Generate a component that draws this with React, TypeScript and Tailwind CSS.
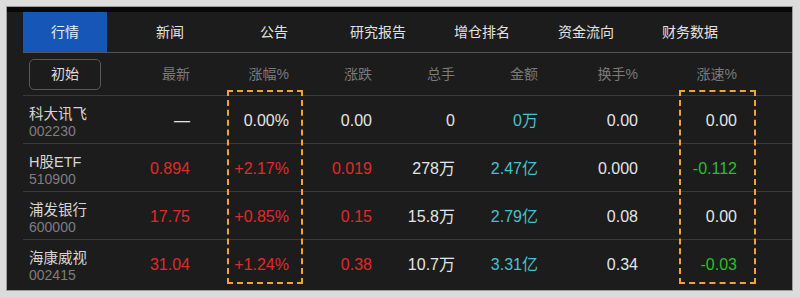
const font = { fontFamily: '"Liberation Sans", "Noto Sans CJK SC", sans-serif' };

const tabs = ["新闻", "公告", "研究报告", "增仓排名", "资金流向", "财务数据"];
const heads = ["最新", "涨幅%", "涨跌", "总手", "金额", "换手%", "涨速%"];

type Row = {
  name: string;
  code: string;
  cells: { v: string; c: string }[];
};

const W = "text-[#e4e4e4]";
const R = "text-[#e02a2a]";
const C = "text-[#45c3cc]";
const G = "text-[#2bbf2b]";

const rows: Row[] = [
  {
    name: "科大讯飞",
    code: "002230",
    cells: [
      { v: "—", c: W },
      { v: "0.00%", c: W },
      { v: "0.00", c: W },
      { v: "0", c: W },
      { v: "0万", c: C },
      { v: "0.00", c: W },
      { v: "0.00", c: W },
    ],
  },
  {
    name: "H股ETF",
    code: "510900",
    cells: [
      { v: "0.894", c: R },
      { v: "+2.17%", c: R },
      { v: "0.019", c: R },
      { v: "278万", c: W },
      { v: "2.47亿", c: C },
      { v: "0.000", c: W },
      { v: "-0.112", c: G },
    ],
  },
  {
    name: "浦发银行",
    code: "600000",
    cells: [
      { v: "17.75", c: R },
      { v: "+0.85%", c: R },
      { v: "0.15", c: R },
      { v: "15.8万", c: W },
      { v: "2.79亿", c: C },
      { v: "0.08", c: W },
      { v: "0.00", c: W },
    ],
  },
  {
    name: "海康威视",
    code: "002415",
    cells: [
      { v: "31.04", c: R },
      { v: "+1.24%", c: R },
      { v: "0.38", c: R },
      { v: "10.7万", c: W },
      { v: "3.31亿", c: C },
      { v: "0.34", c: W },
      { v: "-0.03", c: G },
    ],
  },
];

const grid = "grid grid-cols-[84px_83px_99px_83px_83px_83px_100px_99px_1fr]";

export default function App() {
  return (
    <div className="w-[800px] h-[298px] bg-[#dcdcdc] pt-[6px] pl-[6px]" style={font}>
      <div className="relative w-[787px] h-[285px] border border-[#9c9c9c] bg-[#1c1c1c] overflow-hidden">
        <div className="h-[5px] bg-[#080808]" />
        <div className="pl-[16px]">
          {/* tab bar */}
          <div className="flex h-[41px] border-b border-[#555555] text-[14px] text-[#e2e2e2]">
            <div className="w-[84px] bg-[#1656b6] flex items-center justify-center text-[#e8eef8]">行情</div>
            <div className="w-[11px]" />
            {tabs.map((t) => (
              <div key={t} className="w-[104px] flex items-center justify-center">
                {t}
              </div>
            ))}
          </div>

          {/* header row */}
          <div className={`${grid} h-[43px] border-b border-[#3a3a3a] text-[14px] text-[#7a7a7a]`}>
            <div className="flex items-center pl-[6px]">
              <div className="w-[72px] h-[31px] rounded-[5px] border border-[#585858] flex items-center justify-center text-[#dcdcdc]">
                初始
              </div>
            </div>
            {heads.map((h) => (
              <div key={h} className="flex items-center justify-end">
                {h}
              </div>
            ))}
            <div />
          </div>

          {rows.map((r, i) => (
            <div
              key={r.code}
              className={`${grid} h-[48px] ${i < rows.length - 1 ? "border-b border-[#3a3a3a]" : ""}`}
            >
              <div className="flex flex-col pl-[6px] pt-[9px]">
                <span className="text-[14.5px] leading-[18px] text-[#d6d6d6]">{r.name}</span>
                <span className="text-[14px] leading-[16px] text-[#7e7e7e]">{r.code}</span>
              </div>
              {r.cells.map((c, j) => (
                <div key={j} className={`flex items-center justify-end pt-[2px] text-[16px] ${c.c}`}>
                  {c.v}
                </div>
              ))}
              <div />
            </div>
          ))}
        </div>

        {/* highlight boxes */}
        <div className="absolute left-[220px] top-[83px] w-[76px] h-[194px] border-2 border-dashed border-[#f2a23c]" />
        <div className="absolute left-[672px] top-[83px] w-[77px] h-[194px] border-2 border-dashed border-[#f2a23c]" />
      </div>
    </div>
  );
}
